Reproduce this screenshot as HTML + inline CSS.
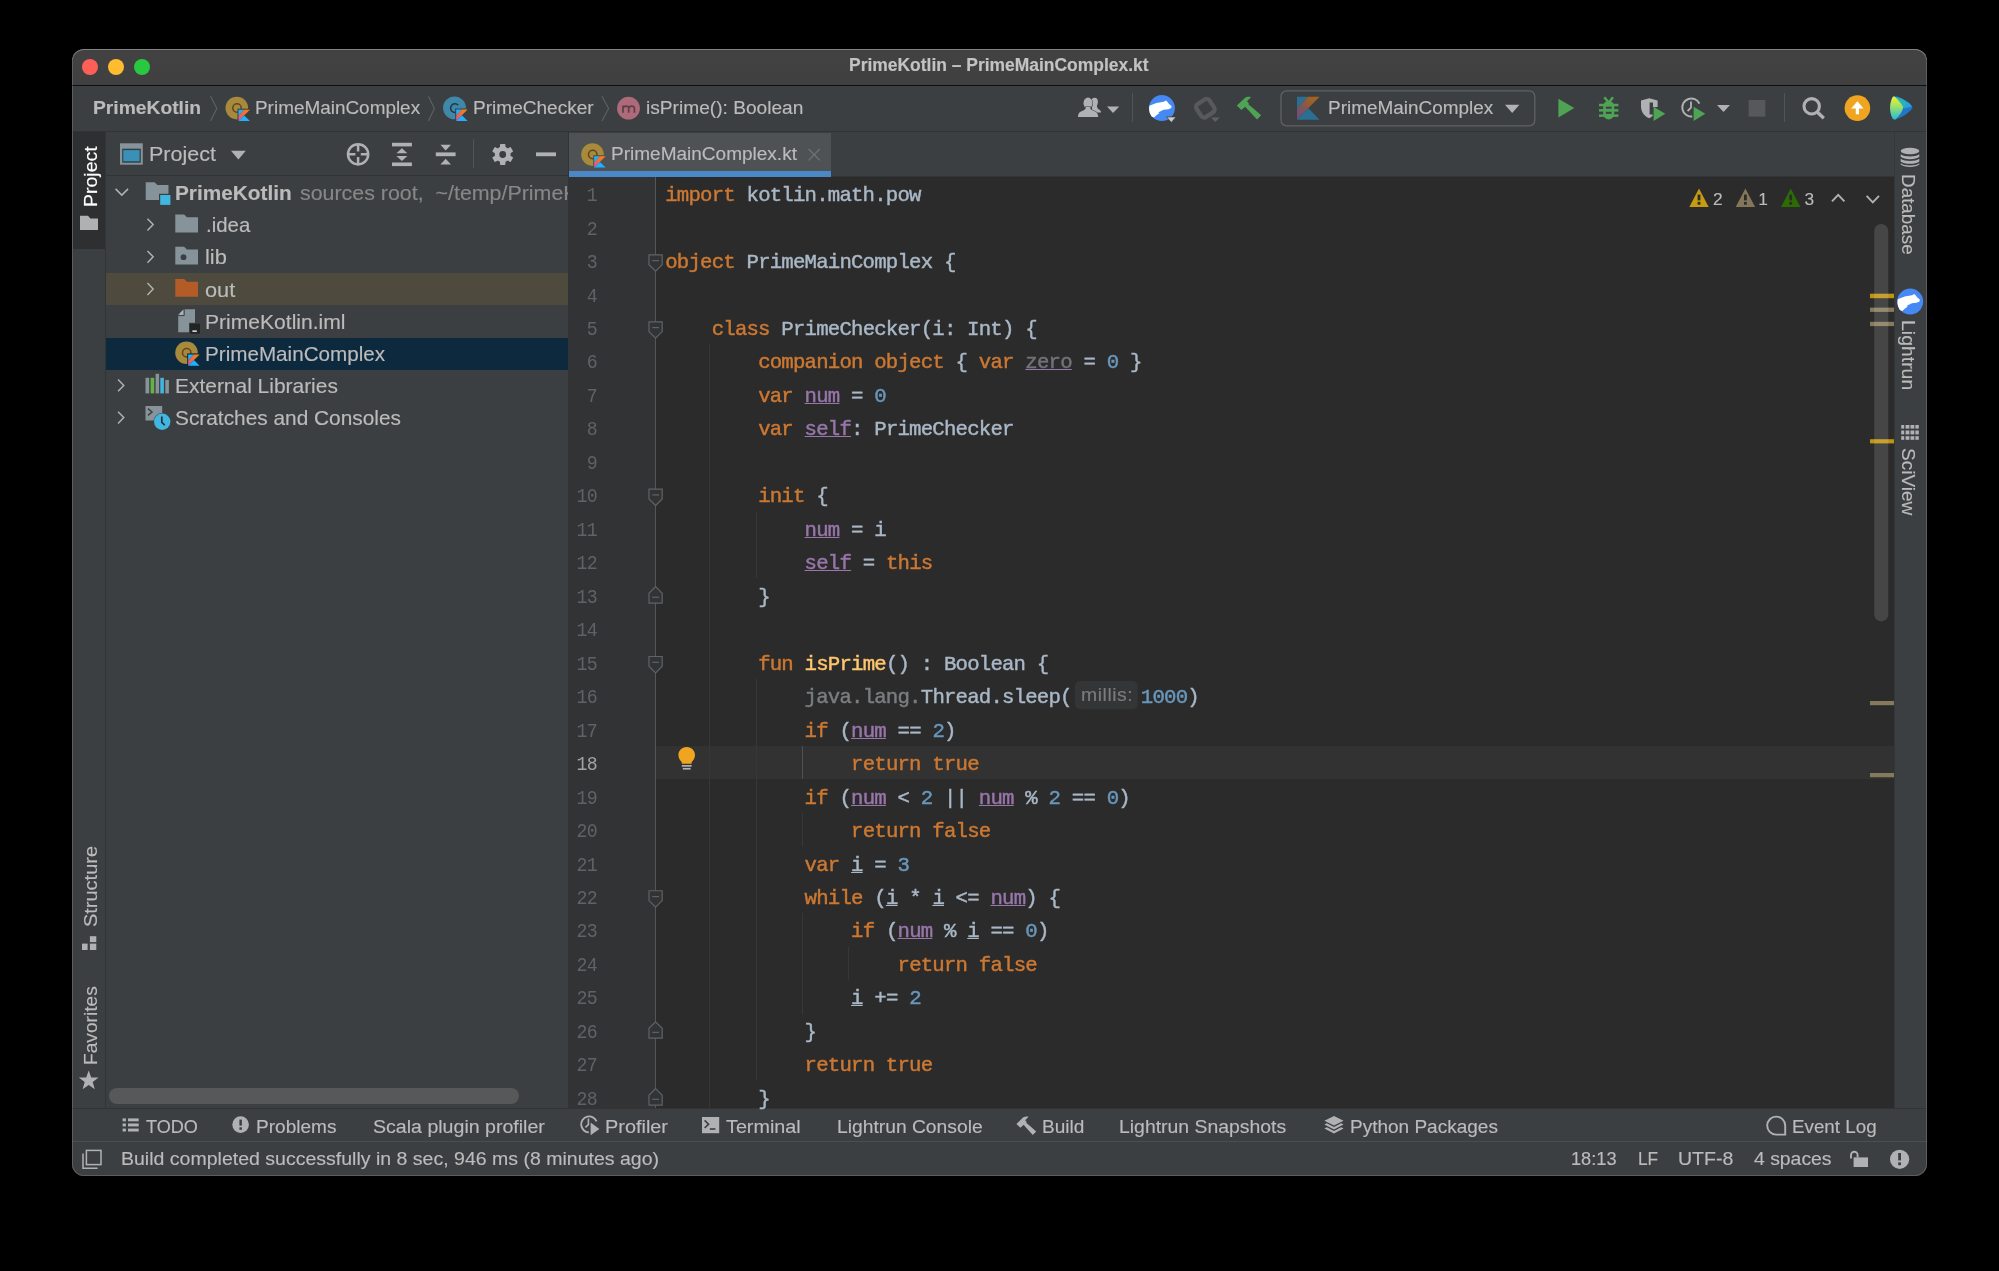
<!DOCTYPE html>
<html lang="en">
<head>
<meta charset="utf-8">
<title>PrimeKotlin – PrimeMainComplex.kt</title>
<style>
html,body{margin:0;padding:0;background:#000;}
body{width:1999px;height:1271px;overflow:hidden;position:relative;font-family:"Liberation Sans",sans-serif;}
#win{position:absolute;left:72px;top:49px;width:1855px;height:1127px;border-radius:12px;overflow:hidden;background:#3c3f41;}
#pg{position:absolute;left:-72px;top:-49px;width:1999px;height:1271px;will-change:transform;}
#pg div,#pg svg{position:absolute;}
#frame{position:absolute;left:72px;top:49px;width:1855px;height:1127px;border-radius:12px;box-shadow:inset 0 0 0 1px rgba(255,255,255,.16), inset 0 1px 0 0 rgba(255,255,255,.22);pointer-events:none;}
.t{white-space:pre;line-height:1;font-family:"Liberation Sans",sans-serif;-webkit-text-stroke:0.15px currentColor;}
.c,.ln{font-family:"Liberation Mono", monospace;font-size:20.7px;letter-spacing:-0.8051px;}.c{-webkit-text-stroke:0.45px currentColor;}
.c,.ln{white-space:pre;line-height:1;}
.ln{left:559.4px;width:38px;text-align:right;transform:scaleX(.88);transform-origin:100% 50%;}
.k{color:#cc7832}.d{color:#a9b7c6}.n{color:#6897bb}.m{color:#ffc66d}.g{color:#7a7e82}
.f{color:#9876aa;text-decoration:underline;text-decoration-thickness:1.4px;text-underline-offset:1.3px;}
.u{color:#72737a;text-decoration:underline;text-decoration-color:#9876aa;text-decoration-thickness:1.4px;text-underline-offset:1.3px;}
.v{color:#a9b7c6;text-decoration:underline;text-decoration-thickness:1.4px;text-underline-offset:1.3px;}
.ig{width:1px;background:#373737;}
</style>
</head>
<body>
<div id="win"><div id="pg">

<!-- title bar -->
<div style="left:72px;top:49px;width:1855px;height:36px;background:linear-gradient(#424242,#404040);"></div>
<div style="left:72px;top:85px;width:1855px;height:1.3px;background:#0e0e0e;"></div>
<div style="left:82.3px;top:59px;width:16px;height:16px;border-radius:50%;background:#fe5f57;"></div>
<div style="left:108px;top:59px;width:16px;height:16px;border-radius:50%;background:#febc2e;"></div>
<div style="left:133.6px;top:59px;width:16px;height:16px;border-radius:50%;background:#28c840;"></div>

<!-- nav bar -->
<div style="left:72px;top:86.3px;width:1855px;height:45.7px;background:#3c3f41;"></div>
<div style="left:72px;top:131px;width:1855px;height:1px;background:#323435;"></div>

<!-- left strip -->
<div style="left:72px;top:132px;width:33px;height:976px;background:#3c3f41;"></div>
<div style="left:73px;top:132px;width:32px;height:116.6px;background:#2d2f30;"></div>
<div style="left:104.5px;top:132px;width:1px;height:976px;background:#323435;"></div>

<!-- project panel -->
<div style="left:105.5px;top:175px;width:463px;height:1.4px;background:#313335;"></div>
<div style="left:105.5px;top:273.1px;width:462.5px;height:32.2px;background:#4e4a3e;"></div>
<div style="left:105.5px;top:337.6px;width:462.5px;height:32.1px;background:#0d293e;"></div>
<div style="left:109px;top:1087.8px;width:410px;height:16.6px;border-radius:8.3px;background:#565859;"></div>
<div style="left:568px;top:132px;width:1px;height:976px;background:#313335;"></div>

<!-- editor tabs -->
<div style="left:569px;top:132px;width:1325px;height:44.6px;background:#3c3f41;"></div>
<div style="left:569px;top:133px;width:261.8px;height:43.6px;background:#4e5254;"></div>
<div style="left:569px;top:171.4px;width:261.8px;height:5.3px;background:#4a88c7;"></div>
<div style="left:830.8px;top:176px;width:1063.2px;height:1px;background:#323435;"></div>

<!-- editor -->
<div style="left:569px;top:176.8px;width:1325px;height:931.4px;background:#2b2b2b;"></div>
<div style="left:569px;top:176.8px;width:86.5px;height:931.4px;background:#313335;"></div>
<div style="left:656px;top:745.8px;width:1238px;height:33px;background:#323232;"></div>
<div style="left:655.2px;top:176.8px;width:1.1px;height:931.4px;background:#555657;"></div>
<div class="ig" style="left:709.07px;top:344.15px;height:764.05px;"></div>
<div class="ig" style="left:755.54px;top:511.50px;height:66.94px;"></div>
<div class="ig" style="left:755.54px;top:678.85px;height:401.64px;"></div>
<div class="ig" style="left:802.00px;top:745.79px;height:33.47px;background:#505152;width:1.3px;"></div>
<div class="ig" style="left:802.00px;top:812.73px;height:33.47px;"></div>
<div class="ig" style="left:802.00px;top:913.14px;height:100.41px;"></div>
<div class="ig" style="left:848.47px;top:946.61px;height:33.47px;"></div>

<!-- right strip -->
<div style="left:1894px;top:132px;width:33px;height:976px;background:#3c3f41;"></div>
<div style="left:1894px;top:132px;width:1px;height:976px;background:#34373a;"></div>

<!-- bottom bars -->
<div style="left:72px;top:1108.2px;width:1855px;height:68px;background:#3c3f41;"></div>
<div style="left:72px;top:1108.2px;width:1855px;height:1.2px;background:#323435;"></div>
<div style="left:72px;top:1141px;width:1855px;height:1px;background:#4b4e50;"></div>

<div class="ln" style="top:186.13px;color:#606366">1</div>
<div class="c k" style="left:665.20px;top:186.13px">import</div>
<div class="c d" style="left:746.52px;top:186.13px">kotlin.math.pow</div>
<div class="ln" style="top:219.60px;color:#606366">2</div>
<div class="ln" style="top:253.07px;color:#606366">3</div>
<div class="c k" style="left:665.20px;top:253.07px">object</div>
<div class="c d" style="left:746.52px;top:253.07px">PrimeMainComplex {</div>
<div class="ln" style="top:286.54px;color:#606366">4</div>
<div class="ln" style="top:320.01px;color:#606366">5</div>
<div class="c k" style="left:711.67px;top:320.01px">class</div>
<div class="c d" style="left:781.37px;top:320.01px">PrimeChecker(i: Int) {</div>
<div class="ln" style="top:353.48px;color:#606366">6</div>
<div class="c k" style="left:758.14px;top:353.48px">companion object</div>
<div class="c d" style="left:955.62px;top:353.48px">{ </div>
<div class="c k" style="left:978.86px;top:353.48px">var</div>
<div class="c u" style="left:1025.33px;top:353.48px">zero</div>
<div class="c d" style="left:1083.41px;top:353.48px">= </div>
<div class="c n" style="left:1106.65px;top:353.48px">0</div>
<div class="c d" style="left:1129.88px;top:353.48px">}</div>
<div class="ln" style="top:386.95px;color:#606366">7</div>
<div class="c k" style="left:758.14px;top:386.95px">var</div>
<div class="c f" style="left:804.60px;top:386.95px">num</div>
<div class="c d" style="left:851.07px;top:386.95px">= </div>
<div class="c n" style="left:874.31px;top:386.95px">0</div>
<div class="ln" style="top:420.42px;color:#606366">8</div>
<div class="c k" style="left:758.14px;top:420.42px">var</div>
<div class="c f" style="left:804.60px;top:420.42px">self</div>
<div class="c d" style="left:851.07px;top:420.42px">: PrimeChecker</div>
<div class="ln" style="top:453.89px;color:#606366">9</div>
<div class="ln" style="top:487.36px;color:#606366">10</div>
<div class="c k" style="left:758.14px;top:487.36px">init</div>
<div class="c d" style="left:816.22px;top:487.36px">{</div>
<div class="ln" style="top:520.83px;color:#606366">11</div>
<div class="c f" style="left:804.60px;top:520.83px">num</div>
<div class="c d" style="left:851.07px;top:520.83px">= i</div>
<div class="ln" style="top:554.30px;color:#606366">12</div>
<div class="c f" style="left:804.60px;top:554.30px">self</div>
<div class="c d" style="left:862.69px;top:554.30px">= </div>
<div class="c k" style="left:885.92px;top:554.30px">this</div>
<div class="ln" style="top:587.77px;color:#606366">13</div>
<div class="c d" style="left:758.14px;top:587.77px">}</div>
<div class="ln" style="top:621.24px;color:#606366">14</div>
<div class="ln" style="top:654.71px;color:#606366">15</div>
<div class="c k" style="left:758.14px;top:654.71px">fun</div>
<div class="c m" style="left:804.60px;top:654.71px">isPrime</div>
<div class="c d" style="left:885.92px;top:654.71px">() : Boolean {</div>
<div class="ln" style="top:688.18px;color:#606366">16</div>
<div class="c g" style="left:804.60px;top:688.18px">java.lang.</div>
<div class="c d" style="left:920.77px;top:688.18px">Thread.sleep(</div>
<div class="c n" style="left:1140.80px;top:688.18px">1000</div>
<div class="c d" style="left:1187.26px;top:688.18px">)</div>
<div class="ln" style="top:721.65px;color:#606366">17</div>
<div class="c k" style="left:804.60px;top:721.65px">if</div>
<div class="c d" style="left:839.46px;top:721.65px">(</div>
<div class="c f" style="left:851.07px;top:721.65px">num</div>
<div class="c d" style="left:897.54px;top:721.65px">== </div>
<div class="c n" style="left:932.39px;top:721.65px">2</div>
<div class="c d" style="left:944.01px;top:721.65px">)</div>
<div class="ln" style="top:755.12px;color:#a4a3a3">18</div>
<div class="c k" style="left:851.07px;top:755.12px">return true</div>
<div class="ln" style="top:788.59px;color:#606366">19</div>
<div class="c k" style="left:804.60px;top:788.59px">if</div>
<div class="c d" style="left:839.46px;top:788.59px">(</div>
<div class="c f" style="left:851.07px;top:788.59px">num</div>
<div class="c d" style="left:897.54px;top:788.59px">&lt; </div>
<div class="c n" style="left:920.77px;top:788.59px">2</div>
<div class="c d" style="left:944.01px;top:788.59px">|| </div>
<div class="c f" style="left:978.86px;top:788.59px">num</div>
<div class="c d" style="left:1025.33px;top:788.59px">% </div>
<div class="c n" style="left:1048.56px;top:788.59px">2</div>
<div class="c d" style="left:1071.79px;top:788.59px">== </div>
<div class="c n" style="left:1106.65px;top:788.59px">0</div>
<div class="c d" style="left:1118.26px;top:788.59px">)</div>
<div class="ln" style="top:822.06px;color:#606366">20</div>
<div class="c k" style="left:851.07px;top:822.06px">return false</div>
<div class="ln" style="top:855.53px;color:#606366">21</div>
<div class="c k" style="left:804.60px;top:855.53px">var</div>
<div class="c v" style="left:851.07px;top:855.53px">i</div>
<div class="c d" style="left:874.31px;top:855.53px">= </div>
<div class="c n" style="left:897.54px;top:855.53px">3</div>
<div class="ln" style="top:889.00px;color:#606366">22</div>
<div class="c k" style="left:804.60px;top:889.00px">while</div>
<div class="c d" style="left:874.31px;top:889.00px">(</div>
<div class="c v" style="left:885.92px;top:889.00px">i</div>
<div class="c d" style="left:909.16px;top:889.00px">* </div>
<div class="c v" style="left:932.39px;top:889.00px">i</div>
<div class="c d" style="left:955.62px;top:889.00px">&lt;= </div>
<div class="c f" style="left:990.48px;top:889.00px">num</div>
<div class="c d" style="left:1025.33px;top:889.00px">) {</div>
<div class="ln" style="top:922.47px;color:#606366">23</div>
<div class="c k" style="left:851.07px;top:922.47px">if</div>
<div class="c d" style="left:885.92px;top:922.47px">(</div>
<div class="c f" style="left:897.54px;top:922.47px">num</div>
<div class="c d" style="left:944.01px;top:922.47px">% </div>
<div class="c v" style="left:967.24px;top:922.47px">i</div>
<div class="c d" style="left:990.48px;top:922.47px">== </div>
<div class="c n" style="left:1025.33px;top:922.47px">0</div>
<div class="c d" style="left:1036.94px;top:922.47px">)</div>
<div class="ln" style="top:955.94px;color:#606366">24</div>
<div class="c k" style="left:897.54px;top:955.94px">return false</div>
<div class="ln" style="top:989.41px;color:#606366">25</div>
<div class="c v" style="left:851.07px;top:989.41px">i</div>
<div class="c d" style="left:874.31px;top:989.41px">+= </div>
<div class="c n" style="left:909.16px;top:989.41px">2</div>
<div class="ln" style="top:1022.88px;color:#606366">26</div>
<div class="c d" style="left:804.60px;top:1022.88px">}</div>
<div class="ln" style="top:1056.35px;color:#606366">27</div>
<div class="c k" style="left:804.60px;top:1056.35px">return true</div>
<div class="ln" style="top:1089.82px;color:#606366">28</div>
<div class="c d" style="left:758.14px;top:1089.82px">}</div>
<svg style="left:0;top:0;color:#3c3f41" width="1999" height="1271" viewBox="0 0 1999 1271">
<defs>
  <linearGradient id="kg" x1="0" y1="1" x2="1" y2="0">
    <stop offset="0" stop-color="#c757bc"/><stop offset=".2" stop-color="#e0607a"/><stop offset=".5" stop-color="#f26b3c"/><stop offset="1" stop-color="#f88909"/>
  </linearGradient>
  <linearGradient id="kgd" x1="0" y1="1" x2="1" y2="0">
    <stop offset="0" stop-color="#6a4c80"/><stop offset=".35" stop-color="#7b555c"/><stop offset=".7" stop-color="#9a5f2c"/><stop offset="1" stop-color="#aa6516"/>
  </linearGradient>
  <linearGradient id="sp1" x1="0" y1="0" x2="0" y2="1">
    <stop offset="0" stop-color="#f2f332"/><stop offset=".45" stop-color="#9be06c"/><stop offset="1" stop-color="#23bdd6"/>
  </linearGradient>
  <!-- kotlin K badge, 12.6 x 12.6 incl. dark cut-out -->
  <symbol id="kbadge" viewBox="0 0 12.6 12.6" overflow="visible">
    <rect x="0" y="0" width="12.8" height="12.8" fill="currentColor"/>
    <path d="M1 1 H6.6 L1 7.2Z" fill="#1fb1ff"/>
    <path d="M6.6 1 H12.4 L1 12.4 V7.2Z" fill="url(#kg)"/>
    <path d="M1 12.4 L6.7 6.7 L12.4 12.4Z" fill="#1fb1ff"/>
  </symbol>
  <symbol id="kobj" viewBox="0 0 25 25" overflow="visible">
    <circle cx="11.3" cy="11.4" r="11.3" fill="#a78a3b"/>
    <circle cx="11.5" cy="11.3" r="4.2" fill="none" stroke="#6a431f" stroke-width="1.55"/>
    <use href="#kbadge" x="12" y="12" width="12.6" height="12.6"/>
  </symbol>
  <symbol id="kcls" viewBox="0 0 25 25" overflow="visible">
    <circle cx="11.3" cy="11.4" r="11.4" fill="#3f88a8"/>
    <path d="M15 8.6 A4.4 4.4 0 1 0 15 14.6" fill="none" stroke="#20374e" stroke-width="1.55"/>
    <use href="#kbadge" x="12" y="12" width="12.6" height="12.6"/>
  </symbol>
  <symbol id="chr" viewBox="0 0 8 14" overflow="visible">
    <path d="M0.8 0.8 L6.8 7 L0.8 13.2" fill="none" stroke="#afb1b3" stroke-width="1.55"/>
  </symbol>
  <symbol id="chd" viewBox="0 0 15 8" overflow="visible">
    <path d="M0.8 0.8 L7.2 7.2 L13.6 0.8" fill="none" stroke="#afb1b3" stroke-width="1.55"/>
  </symbol>
  <symbol id="fold" viewBox="0 0 23 18" overflow="visible">
    <path d="M0 0 H9 L11.7 2.7 H23 V18 H0Z"/>
  </symbol>
  <symbol id="warn" viewBox="0 0 19.4 18.4" overflow="visible">
    <path d="M9.7 0 L19.4 18.4 H0Z"/>
    <rect x="8.3" y="6" width="2.8" height="5.8" fill="#2b2b2b"/>
    <rect x="8.3" y="13.3" width="2.8" height="2.8" fill="#2b2b2b"/>
  </symbol>
  <symbol id="foldS" viewBox="0 0 14.4 17.6" overflow="visible">
    <path d="M0.6 0.6 H13.8 V10.4 L7.2 17 L0.6 10.4Z" fill="#313335" stroke="#606366" stroke-width="1.2"/>
    <path d="M3.8 6.4 H10.6" stroke="#606366" stroke-width="1.2"/>
  </symbol>
  <symbol id="foldE" viewBox="0 0 14.4 17.6" overflow="visible">
    <path d="M0.6 17 H13.8 V7.2 L7.2 0.6 L0.6 7.2Z" fill="#313335" stroke="#606366" stroke-width="1.2"/>
    <path d="M3.8 11.2 H10.6" stroke="#606366" stroke-width="1.2"/>
  </symbol>
  <symbol id="lightrun" viewBox="0 0 26 26" overflow="visible">
    <circle cx="13" cy="13" r="13" fill="#4688f4"/>
    <path d="M0.5 10.6 L7.5 7.9 L14.7 6.6 L17.2 5.4 L18.6 6.9 L20.1 9 L22.6 11 L22.3 13 L19.5 14.1 L14.7 14.7 L11.1 16.5 L9.3 17.5 L10.6 18 L7.5 20.2 L5.1 22.4 L2.6 21.4 L0.8 17.7 L0.2 14.1Z" fill="#ffffff"/>
  </symbol>
</defs>

<!-- ===== breadcrumbs ===== -->
<g fill="none" stroke="#5e6264" stroke-width="1.1">
  <path d="M210.6 96.2 L216.8 108.6 L210.6 121"/>
  <path d="M428.4 96.2 L434.4 108.6 L428.4 121"/>
  <path d="M602 96.2 L608.6 108.6 L602 121"/>
</g>
<use href="#kobj" x="225.5" y="96.7" width="25" height="25"/>
<use href="#kcls" x="443.2" y="96.5" width="25" height="25"/>
<circle cx="628.5" cy="108.2" r="11.4" fill="#ad6a7b"/>
<path d="M623 112.8 V105.6 M623 108.2 C623.4 105.6 628.6 105.2 628.7 108.2 V112.8 M628.7 108.2 C629.1 105.6 634.3 105.2 634.4 108.2 V112.8" fill="none" stroke="#5f3f47" stroke-width="1.75"/>

<!-- ===== main toolbar ===== -->
<!-- users -->
<g fill="#afb1b3">
  <ellipse cx="1094.6" cy="101.9" rx="3.3" ry="4.2"/>
  <path d="M1092 105 H1097 C1096.8 107.6 1097.6 108.6 1099 109.4 C1100.6 110.2 1101 111.2 1101 112.4 H1092Z"/>
</g>
<g fill="#afb1b3" stroke="#3c3f41" stroke-width="1.1" paint-order="stroke">
  <ellipse cx="1088" cy="103.3" rx="4.5" ry="5.7"/>
  <path d="M1078 116.9 C1078 112.4 1080.6 111.4 1083.8 110.2 C1085.6 109.5 1085.8 108.4 1085.6 107 H1090.4 C1090.2 108.4 1090.4 109.5 1092.2 110.2 C1095.4 111.4 1098.2 112.4 1098.2 116.9Z"/>
</g>
<path d="M1107 106.6 H1119.2 L1113.1 113.1Z" fill="#afb1b3"/>
<rect x="1132" y="92.8" width="1.1" height="29" fill="#515456"/>
<!-- lightrun -->
<use href="#lightrun" x="1148.9" y="95.1" width="26" height="26"/>
<path d="M1166.4 116.9 H1176.2 L1171.3 122.4Z" fill="#c9cbcc" stroke="#3c3f41" stroke-width=".8"/>
<!-- grey diamond -->
<rect x="1197.7" y="100.5" width="15.4" height="15.4" rx="3.6" fill="none" stroke="#57595b" stroke-width="4.3" transform="rotate(-33 1205.4 108.2)"/>
<path d="M1210.9 117.6 H1219.7 L1215.3 122Z" fill="#5e6062"/>
<!-- hammer -->
<g fill="#4fa355">
  <path d="M1236.8 105.4 L1244.6 98.2 C1246.6 96.6 1249 96.6 1251 97.2 L1247 101.2 L1249 103.4 L1241.4 110 C1240 108.6 1238.2 106.8 1236.8 105.4Z"/>
  <path d="M1246.4 102.6 L1261.2 115.2 L1257 119.4 L1243.8 105.2Z"/>
</g>
<!-- run configuration box -->
<rect x="1281" y="90.9" width="253.8" height="34.9" rx="5.5" fill="none" stroke="#5f6163" stroke-width="1.3"/>
<g>
  <path d="M1297 96.8 H1308 L1297 108.6Z" fill="#2c6f95"/>
  <path d="M1308 96.8 H1319.5 L1297 119.7 V108.6Z" fill="url(#kgd)"/>
  <path d="M1297 119.7 L1308.4 108.2 L1319.5 119.7Z" fill="#2c6f95"/>
</g>
<path d="M1505 104.8 H1519.4 L1512.2 113Z" fill="#afb1b3"/>
<!-- run -->
<path d="M1558.4 98.7 V117.4 L1574.3 108Z" fill="#4fa355"/>
<!-- bug -->
<g fill="#4fa355">
  <path d="M1603.2 106.4 A5.5 5.6 0 0 1 1614.2 106.4 V113.6 A5.5 5.9 0 0 1 1603.2 113.6Z"/>
  <rect x="1599" y="103.8" width="19.4" height="2.5"/>
  <rect x="1599" y="109.1" width="19.4" height="2.5"/>
  <rect x="1599" y="114.4" width="19.4" height="2.5"/>
  <path d="M1603.4 98 L1605.4 96.6 L1608.7 100.8 L1612 96.6 L1614 98 L1610.2 102.8 H1607.2Z"/>
</g>
<rect x="1605.8" y="106.7" width="5.8" height="2" fill="#3c3f41"/>
<rect x="1605.8" y="111.8" width="5.8" height="2" fill="#3c3f41"/>
<!-- coverage shield -->
<path d="M1641 100.6 L1649.3 98.2 L1657.6 100.6 V107 H1653 V102.4 H1649.6 V114.6 H1652.6 V116 L1649.3 118.2 C1644.6 116.4 1641.4 112.6 1641 107Z" fill="#afb1b3"/>
<path d="M1653.6 106.8 V120.9 L1665.3 113.8Z" fill="#4fa355"/>
<!-- profile clock -->
<path d="M1699.4 103.6 A9 9 0 1 0 1692.2 116.4" fill="none" stroke="#afb1b3" stroke-width="2"/>
<path d="M1691 101.6 V107.6 L1687.6 111" fill="none" stroke="#afb1b3" stroke-width="1.8"/>
<path d="M1693.6 106.8 V120.9 L1705.3 113.8Z" fill="#4fa355"/>
<path d="M1717 105 H1730 L1723.5 112Z" fill="#afb1b3"/>
<!-- stop -->
<rect x="1748.6" y="100" width="16.7" height="16.6" fill="#56585a"/>
<rect x="1784" y="93" width="1.1" height="29" fill="#515456"/>
<!-- search -->
<circle cx="1811.7" cy="106.3" r="7.7" fill="none" stroke="#afb1b3" stroke-width="3.1"/>
<path d="M1817.2 112 L1823.8 118.2" stroke="#afb1b3" stroke-width="3.4"/>
<!-- update -->
<circle cx="1857.4" cy="108.1" r="12.8" fill="#f0a521"/>
<path d="M1857.4 101.2 L1863.6 108.4 H1859 V114.3 H1855.8 V108.4 H1851.2Z" fill="#ffffff"/>
<!-- space -->
<g>
  <path d="M1892.4 97.4 C1893.2 96 1895 96 1896.6 96.6 C1903.8 99 1909.4 102.8 1912 106.4 C1912.6 107.2 1912.6 108 1912 108.8 C1908.4 113.4 1901.4 117.8 1895.4 119.4 C1893.6 119.8 1892.8 119 1892.2 117.6 C1889.4 110.8 1889.4 104 1892.4 97.4Z" fill="#2276c9"/>
  <path d="M1896.6 96.6 C1903.8 99 1909.4 102.8 1912 106.4 L1904 108.4 L1898 100Z" fill="#27a3dc"/>
  <path d="M1893.4 96.6 C1899 97.6 1903.6 100.6 1906.6 103.6 L1903 108 L1896 98Z" fill="#2db5ab"/>
  <path d="M1892.4 97.4 C1893.2 96 1894.6 96.2 1895.6 97.4 C1899.6 101.4 1902 104.6 1903.2 107.4 C1902.4 111.4 1899 116 1895.4 119.4 C1893.6 119.8 1892.8 119 1892.2 117.6 C1889.4 110.8 1889.4 104 1892.4 97.4Z" fill="url(#sp1)"/>
</g>
<!-- ===== project tool window header ===== -->
<rect x="120" y="143.3" width="22.8" height="21.4" fill="#87939a"/>
<rect x="122.2" y="148.7" width="18.6" height="14" fill="#2f3d47"/>
<rect x="123.3" y="150.1" width="16.3" height="11.2" fill="#3a90b6"/>
<path d="M231 150.8 H245.8 L238.4 159.4Z" fill="#afb1b3"/>
<g fill="none" stroke="#afb1b3" stroke-width="2.5">
  <circle cx="358.1" cy="154.3" r="10.1"/>
  <path d="M358.1 144.2 V151.6 M358.1 157 V164.4 M348 154.3 H355.4 M360.8 154.3 H368.2"/>
</g>
<g fill="#afb1b3">
  <rect x="392" y="142.8" width="19.9" height="3.6"/>
  <rect x="392" y="162.5" width="19.9" height="3.6"/>
  <path d="M396.4 153.2 H407.4 L401.9 148.2Z"/>
  <path d="M396.4 156 H407.4 L401.9 161Z"/>
  <rect x="435.8" y="152.4" width="19.8" height="3.8"/>
  <path d="M440.4 144.8 H451 L445.7 150.4Z"/>
  <path d="M440.4 164.4 H451 L445.7 158.8Z"/>
  <rect x="536" y="152.4" width="20" height="3.8"/>
</g>
<rect x="473" y="139.2" width="1.1" height="29.2" fill="#515456"/>
<!-- gear -->
<g transform="translate(502.7 154.5)">
  <g fill="#afb1b3">
    <rect x="-2.7" y="-10.6" width="5.4" height="21.2" rx=".8"/>
    <rect x="-2.7" y="-10.6" width="5.4" height="21.2" rx=".8" transform="rotate(60)"/>
    <rect x="-2.7" y="-10.6" width="5.4" height="21.2" rx=".8" transform="rotate(120)"/>
    <circle r="7.9"/>
  </g>
  <circle r="3.4" fill="#3c3f41"/>
</g>
<!-- tab close -->
<path d="M808.6 149 L819.8 160.4 M819.8 149 L808.6 160.4" stroke="#6e7377" stroke-width="1.3" fill="none"/>
<use href="#kobj" x="581.2" y="143.2" width="25" height="25" color="#4e5254"/>

<!-- ===== project tree ===== -->
<use href="#chd" x="114.8" y="188" width="14.6" height="8"/>
<use href="#chr" x="146.7" y="217.8" width="7.6" height="13.6"/>
<use href="#chr" x="146.7" y="250" width="7.6" height="13.6"/>
<use href="#chr" x="146.7" y="282.2" width="7.6" height="13.6"/>
<use href="#chr" x="117.3" y="378.6" width="7.6" height="13.6"/>
<use href="#chr" x="117.3" y="410.8" width="7.6" height="13.6"/>
<!-- module root -->
<use href="#fold" x="145.5" y="182.3" width="23.2" height="17.8" fill="#87939a"/>
<rect x="159" y="193.8" width="12.4" height="12.1" fill="#3c3f41"/>
<rect x="160.2" y="195" width="10.2" height="9.9" fill="#40b6e0"/>
<!-- folders -->
<use href="#fold" x="175.2" y="214.6" width="22.9" height="17.8" fill="#87939a"/>
<use href="#fold" x="175.2" y="246.8" width="22.9" height="17.8" fill="#87939a"/>
<circle cx="183.5" cy="257.2" r="2.9" fill="#3c3f41"/>
<use href="#fold" x="175.2" y="279" width="22.9" height="17.8" fill="#b35c28"/>
<!-- iml file -->
<path d="M184 309.3 H195 V332.2 H178.2 V315.2Z" fill="#87939a"/>
<path d="M183.4 309.6 V314.8 H178.4Z" fill="#aeb6bb"/>
<path d="M184.2 309.3 V315.6 H178.2" fill="none" stroke="#3c3f41" stroke-width="1"/>
<rect x="189" y="322.8" width="11.6" height="11.6" fill="#3c3f41"/>
<rect x="190" y="323.7" width="10" height="10" fill="#232525"/>
<rect x="192.4" y="330.4" width="4.4" height="1.5" fill="#e8e8e8"/>
<use href="#kobj" x="175.2" y="341.4" width="25" height="25" color="#0d293e"/>
<!-- external libraries -->
<rect x="145.5" y="377.8" width="3.7" height="15.6" fill="#87939a"/>
<rect x="150.6" y="377.8" width="3.6" height="15.6" fill="#62b543"/>
<rect x="155.6" y="373.8" width="3.5" height="19.6" fill="#87939a"/>
<rect x="160.3" y="377.8" width="3.6" height="15.6" fill="#40b6e0"/>
<rect x="165.3" y="380" width="3.6" height="13.4" fill="#87939a"/>
<!-- scratches -->
<path d="M145.5 406 H162.2 V413 A9 9 0 0 0 153.6 420.6 H145.5Z" fill="#87939a"/>
<path d="M148 408.6 L152 412 L148 415.4" fill="none" stroke="#3c3f41" stroke-width="1.5"/>
<circle cx="162.2" cy="421.8" r="8.2" fill="#40b6e0"/>
<path d="M161.8 416.6 V422.4 L164.8 425.2" fill="none" stroke="#24343f" stroke-width="1.7"/>

<!-- ===== left strip ===== -->
<path d="M80 215.8 H88 L90.4 218.4 H98 V229.9 H80Z" fill="#afb1b3"/>
<g fill="#afb1b3">
  <rect x="82" y="943.6" width="5.6" height="6.4"/>
  <rect x="89.9" y="936.2" width="6.4" height="5.9"/>
  <rect x="89.9" y="943.6" width="6.4" height="6.4"/>
</g>
<path d="M88.7 1070.4 L91.2 1077.4 L98.6 1077.6 L92.7 1082.1 L94.8 1089.3 L88.7 1085.1 L82.6 1089.3 L84.7 1082.1 L78.8 1077.6 L86.2 1077.4Z" fill="#afb1b3"/>

<!-- ===== right strip ===== -->
<g fill="#afb1b3">
  <ellipse cx="1910" cy="151" rx="9.3" ry="3.3"/>
  <path d="M1900.7 154.2 C1904 157.2 1916 157.2 1919.3 154.2 V156.8 C1916 160 1904 160 1900.7 156.8Z"/>
  <path d="M1900.7 158.8 C1904 161.8 1916 161.8 1919.3 158.8 V161.4 C1916 164.6 1904 164.6 1900.7 161.4Z"/>
  <path d="M1900.7 163.3 C1904 166.3 1916 166.3 1919.3 163.3 V164.6 C1916 167.8 1904 167.8 1900.7 164.6Z"/>
</g>
<use href="#lightrun" x="1897.2" y="288.6" width="26" height="26"/>
<g fill="#afb1b3">
  <rect x="1901.2" y="425" width="3" height="3.6"/><rect x="1905.6" y="425" width="3.8" height="3.6"/><rect x="1910.5" y="425" width="3.8" height="3.6"/><rect x="1915.4" y="425" width="3.4" height="3.6"/>
  <rect x="1901.2" y="430.5" width="3" height="3.9"/><rect x="1905.6" y="430.5" width="3.8" height="3.9"/><rect x="1910.5" y="430.5" width="3.8" height="3.9"/><rect x="1915.4" y="430.5" width="3.4" height="3.9"/>
  <rect x="1901.2" y="436.2" width="3" height="3.6"/><rect x="1905.6" y="436.2" width="3.8" height="3.6"/><rect x="1910.5" y="436.2" width="3.8" height="3.6"/><rect x="1915.4" y="436.2" width="3.4" height="3.6"/>
</g>

<!-- ===== editor widgets ===== -->
<use href="#warn" x="1689.3" y="188.6" width="19.4" height="18.4" fill="#c69a11"/>
<use href="#warn" x="1735.7" y="188.6" width="19.4" height="18.4" fill="#857659"/>
<use href="#warn" x="1781" y="188.6" width="19.4" height="18.4" fill="#2b6d03"/>
<path d="M1832 201.4 L1838.2 194.8 L1844.4 201.4" fill="none" stroke="#afb1b3" stroke-width="1.9"/>
<path d="M1866.6 195.8 L1872.8 202.4 L1879 195.8" fill="none" stroke="#afb1b3" stroke-width="1.9"/>
<g>
  <rect x="1870" y="293.7" width="24" height="4.5" fill="#bf9412"/>
  <rect x="1870" y="307.6" width="24" height="4.3" fill="#857a5c"/>
  <rect x="1870" y="321.8" width="24" height="4.3" fill="#857a5c"/>
  <rect x="1870" y="439.2" width="24" height="4.2" fill="#bf9412"/>
  <rect x="1870" y="701" width="24" height="4.2" fill="#857a5c"/>
  <rect x="1870" y="773" width="24" height="4.2" fill="#857a5c"/>
</g>
<rect x="1874.2" y="224" width="14.1" height="397.4" rx="7" fill="#ffffff" fill-opacity=".13"/>
<rect x="1075" y="681" width="62.8" height="28.2" rx="5" fill="#333537"/>
<!-- bulb -->
<path d="M686.7 747 C681.6 747 678.4 750.8 678.4 755.2 C678.4 758.6 680.6 760.6 681.8 762.2 V763.8 H691.6 V762.2 C692.8 760.6 695 758.6 695 755.2 C695 750.8 691.8 747 686.7 747Z" fill="#f0a521"/>
<rect x="681.8" y="765" width="9.8" height="1.7" fill="#afb1b3"/>
<rect x="682.8" y="767.9" width="7.8" height="1.7" fill="#afb1b3"/>
<use href="#foldS" x="648.4" y="254.24" width="14.4" height="17.6"/>
<use href="#foldS" x="648.4" y="321.18" width="14.4" height="17.6"/>
<use href="#foldS" x="648.4" y="488.53" width="14.4" height="17.6"/>
<use href="#foldS" x="648.4" y="655.88" width="14.4" height="17.6"/>
<use href="#foldS" x="648.4" y="890.17" width="14.4" height="17.6"/>
<use href="#foldE" x="648.4" y="586.04" width="14.4" height="17.6"/>
<use href="#foldE" x="648.4" y="1021.15" width="14.4" height="17.6"/>
<use href="#foldE" x="648.4" y="1088.09" width="14.4" height="17.6"/>

<!-- ===== bottom tool window bar ===== -->
<g fill="#afb1b3">
  <rect x="122.6" y="1118.4" width="3.3" height="2.9"/><rect x="128" y="1118.4" width="10.7" height="2.9"/>
  <rect x="122.6" y="1123.5" width="3.3" height="2.9"/><rect x="128" y="1123.5" width="10.7" height="2.9"/>
  <rect x="122.6" y="1128.6" width="3.3" height="2.9"/><rect x="128" y="1128.6" width="10.7" height="2.9"/>
  <circle cx="240.6" cy="1124.6" r="8.3"/>
</g>
<rect x="239.4" y="1119.6" width="2.5" height="6" fill="#3c3f41"/>
<rect x="239.4" y="1127.3" width="2.5" height="2.5" fill="#3c3f41"/>
<!-- profiler -->
<path d="M596.6 1121.4 A8 8 0 1 0 588.8 1132.4" fill="none" stroke="#afb1b3" stroke-width="1.9"/>
<path d="M588.4 1118.6 V1124.6 L585.4 1127.4" fill="none" stroke="#afb1b3" stroke-width="1.6"/>
<path d="M590.6 1122.6 V1135.2 L599.4 1128.9Z" fill="#afb1b3"/>
<!-- terminal -->
<rect x="702" y="1117" width="17.2" height="16.2" fill="#afb1b3"/>
<path d="M704.6 1120.4 L708.6 1124.2 L704.6 1128" fill="none" stroke="#3c3f41" stroke-width="1.6"/>
<rect x="709.8" y="1128.2" width="5.6" height="1.6" fill="#3c3f41"/>
<!-- build hammer -->
<g fill="#afb1b3">
  <path d="M1016.4 1124 L1023 1117.6 C1024.8 1116.2 1026.8 1116.2 1028.6 1116.8 L1025.2 1120.2 L1026.8 1122 L1020.4 1127.8Z"/>
  <path d="M1024.6 1121.2 L1036.2 1131.6 L1032.8 1135 L1022.4 1123.4Z"/>
</g>
<!-- python packages layers -->
<g fill="#afb1b3">
  <path d="M1334 1116 L1343.6 1120.8 L1334 1125.6 L1324.4 1120.8Z"/>
  <path d="M1324.4 1124.4 L1326.8 1123.2 L1334 1126.9 L1341.2 1123.2 L1343.6 1124.4 L1334 1129.4Z"/>
  <path d="M1324.4 1128.4 L1326.8 1127.2 L1334 1130.9 L1341.2 1127.2 L1343.6 1128.4 L1334 1133.4Z"/>
  <path d="M1324.4 1130.4 L1326.8 1131.2 L1334 1134.9 L1341.2 1131.2 L1343.6 1130.4 L1334 1135.4Z" opacity="0"/>
</g>
<!-- event log -->
<path d="M1785.2 1134.6 H1776 A9 9 0 1 1 1785.2 1125.4Z" fill="none" stroke="#afb1b3" stroke-width="1.9"/>

<!-- ===== status bar ===== -->
<g fill="none" stroke="#afb1b3" stroke-width="1.5">
  <rect x="86.4" y="1150.4" width="14.6" height="14.2"/>
  <path d="M83 1153.6 V1168.2 H97.6"/>
</g>
<g>
  <rect x="1853.6" y="1157.4" width="14.4" height="9.6" fill="#afb1b3"/>
  <path d="M1851 1158.6 V1155 A3.3 3.3 0 0 1 1857.6 1155 V1157.6" fill="none" stroke="#afb1b3" stroke-width="1.9"/>
  <circle cx="1899.6" cy="1159.3" r="9.6" fill="#afb1b3"/>
  <rect x="1898.2" y="1153" width="2.8" height="7.4" fill="#3c3f41"/>
  <rect x="1898.2" y="1162.4" width="2.8" height="2.8" fill="#3c3f41"/>
</g>

</svg>

<div class="t" style="font-size:17.5px;color:#c3c3c3;font-weight:700;left:848.86px;top:57.19px;transform-origin:0 0;transform:scaleX(0.9969);">PrimeKotlin – PrimeMainComplex.kt</div>
<div class="t" style="font-size:18.7px;color:#bbbbbb;font-weight:700;left:92.88px;top:98.87px;transform-origin:0 0;transform:scaleX(1.0302);">PrimeKotlin</div>
<div class="t" style="font-size:18.7px;color:#bbbbbb;left:255.20px;top:98.87px;transform-origin:0 0;transform:scaleX(1.0127);">PrimeMainComplex</div>
<div class="t" style="font-size:18.7px;color:#bbbbbb;left:472.69px;top:98.87px;transform-origin:0 0;transform:scaleX(1.0188);">PrimeChecker</div>
<div class="t" style="font-size:18.7px;color:#bbbbbb;left:646.19px;top:98.87px;transform-origin:0 0;transform:scaleX(1.0241);">isPrime(): Boolean</div>
<div class="t" style="font-size:18.7px;color:#bbbbbb;left:1327.89px;top:99.47px;transform-origin:0 0;transform:scaleX(1.0139);">PrimeMainComplex</div>
<div class="t" style="font-size:20.2px;color:#bbbbbb;left:149.29px;top:143.60px;transform-origin:0 0;transform:scaleX(1.0650);">Project</div>
<div class="t" style="font-size:18.7px;color:#bbbbbb;left:611.19px;top:144.67px;transform-origin:0 0;transform:scaleX(1.0172);">PrimeMainComplex.kt</div>
<div class="t" style="font-size:20.2px;color:#bbbbbb;font-weight:700;left:175.42px;top:182.90px;transform-origin:0 0;transform:scaleX(1.0298);">PrimeKotlin</div>
<div class="t" style="font-size:20.2px;color:#878787;left:300.09px;top:182.90px;transform-origin:0 0;transform:scaleX(1.0595);width:252.85px;height:26.3px;overflow:hidden;">sources root,  ~/temp/PrimeKotlin</div>
<div class="t" style="font-size:20.2px;color:#bbbbbb;left:205.63px;top:215.10px;transform-origin:0 0;transform:scaleX(1.0104);">.idea</div>
<div class="t" style="font-size:20.2px;color:#bbbbbb;left:205.37px;top:247.30px;transform-origin:0 0;transform:scaleX(1.0819);">lib</div>
<div class="t" style="font-size:20.2px;color:#bbbbbb;left:204.68px;top:279.50px;transform-origin:0 0;transform:scaleX(1.0773);">out</div>
<div class="t" style="font-size:20.2px;color:#bbbbbb;left:204.90px;top:311.70px;transform-origin:0 0;transform:scaleX(1.0436);">PrimeKotlin.iml</div>
<div class="t" style="font-size:20.2px;color:#bbbbbb;left:204.92px;top:343.90px;transform-origin:0 0;transform:scaleX(1.0228);">PrimeMainComplex</div>
<div class="t" style="font-size:20.2px;color:#bbbbbb;left:175.41px;top:376.10px;transform-origin:0 0;transform:scaleX(1.0368);">External Libraries</div>
<div class="t" style="font-size:20.2px;color:#bbbbbb;left:175.41px;top:408.30px;transform-origin:0 0;transform:scaleX(1.0327);">Scratches and Consoles</div>
<div class="t" style="font-size:18.7px;color:#bbbbbb;left:145.83px;top:1117.77px;transform-origin:0 0;transform:scaleX(0.9680);">TODO</div>
<div class="t" style="font-size:18.7px;color:#bbbbbb;left:256.39px;top:1117.77px;transform-origin:0 0;transform:scaleX(1.0188);">Problems</div>
<div class="t" style="font-size:18.7px;color:#bbbbbb;left:373.37px;top:1117.77px;transform-origin:0 0;transform:scaleX(1.0471);">Scala plugin profiler</div>
<div class="t" style="font-size:18.7px;color:#bbbbbb;left:605.45px;top:1117.77px;transform-origin:0 0;transform:scaleX(1.0640);">Profiler</div>
<div class="t" style="font-size:18.7px;color:#bbbbbb;left:726.16px;top:1117.77px;transform-origin:0 0;transform:scaleX(1.0574);">Terminal</div>
<div class="t" style="font-size:18.7px;color:#bbbbbb;left:837.18px;top:1117.77px;transform-origin:0 0;transform:scaleX(1.0307);">Lightrun Console</div>
<div class="t" style="font-size:18.7px;color:#bbbbbb;left:1042.49px;top:1117.77px;transform-origin:0 0;transform:scaleX(1.0182);">Build</div>
<div class="t" style="font-size:18.7px;color:#bbbbbb;left:1119.18px;top:1117.77px;transform-origin:0 0;transform:scaleX(1.0379);">Lightrun Snapshots</div>
<div class="t" style="font-size:18.7px;color:#bbbbbb;left:1349.69px;top:1117.77px;transform-origin:0 0;transform:scaleX(1.0169);">Python Packages</div>
<div class="t" style="font-size:18.7px;color:#bbbbbb;left:1792.20px;top:1117.77px;transform-origin:0 0;transform:scaleX(1.0051);">Event Log</div>
<div class="t" style="font-size:18.7px;color:#bbbbbb;left:120.77px;top:1149.87px;transform-origin:0 0;transform:scaleX(1.0444);">Build completed successfully in 8 sec, 946 ms (8 minutes ago)</div>
<div class="t" style="font-size:18.7px;color:#bbbbbb;left:1571.23px;top:1149.87px;transform-origin:0 0;transform:scaleX(0.9740);">18:13</div>
<div class="t" style="font-size:18.7px;color:#bbbbbb;left:1637.57px;top:1149.87px;transform-origin:0 0;transform:scaleX(0.9247);">LF</div>
<div class="t" style="font-size:18.7px;color:#bbbbbb;left:1678.47px;top:1149.87px;transform-origin:0 0;transform:scaleX(1.0455);">UTF-8</div>
<div class="t" style="font-size:18.7px;color:#bbbbbb;left:1753.98px;top:1149.87px;transform-origin:0 0;transform:scaleX(1.0368);">4 spaces</div>
<div class="t" style="font-size:17.3px;color:#bbbbbb;left:1712.99px;top:190.76px;transform-origin:0 0;transform:scaleX(1.0000);">2</div>
<div class="t" style="font-size:17.3px;color:#bbbbbb;left:1758.14px;top:190.76px;transform-origin:0 0;transform:scaleX(1.0000);">1</div>
<div class="t" style="font-size:17.3px;color:#bbbbbb;left:1804.54px;top:190.76px;transform-origin:0 0;transform:scaleX(1.0000);">3</div>
<div class="t" style="font-size:17.6px;color:#7c7c7c;letter-spacing:0.510px;left:1080.58px;top:687.00px;transform-origin:0 0;transform:scaleX(1.1000);">millis:</div>
<div class="t" style="font-size:18.7px;color:#ffffff;left:82.17px;top:206.83px;transform-origin:0 0;transform:rotate(-90deg) scaleX(1.0445);">Project</div>
<div class="t" style="font-size:18.7px;color:#bbbbbb;left:82.17px;top:927.35px;transform-origin:0 0;transform:rotate(-90deg) scaleX(1.0682);">Structure</div>
<div class="t" style="font-size:18.7px;color:#bbbbbb;left:82.17px;top:1064.81px;transform-origin:0 0;transform:rotate(-90deg) scaleX(1.0243);">Favorites</div>
<div class="t" style="font-size:18.7px;color:#bbbbbb;left:1916.53px;top:174.00px;transform-origin:0 0;transform:rotate(90deg) scaleX(1.0101);">Database</div>
<div class="t" style="font-size:18.7px;color:#bbbbbb;left:1916.53px;top:319.57px;transform-origin:0 0;transform:rotate(90deg) scaleX(1.0401);">Lightrun</div>
<div class="t" style="font-size:18.7px;color:#bbbbbb;left:1916.53px;top:448.19px;transform-origin:0 0;transform:rotate(90deg) scaleX(1.0178);">SciView</div>
</div></div>
<div id="frame"></div>
</body>
</html>
